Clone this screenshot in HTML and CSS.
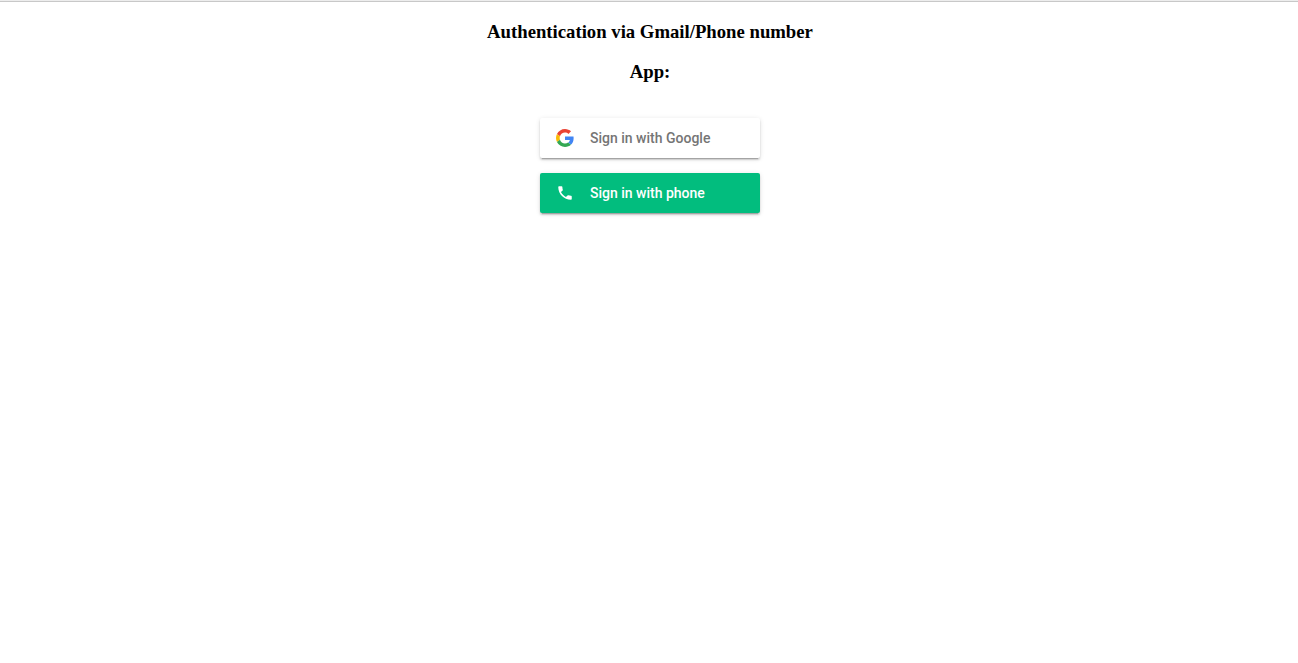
FILE: index.html
```html
<!DOCTYPE html>
<html lang="en">
<head>
<meta charset="utf-8">
<meta name="viewport" content="width=device-width, initial-scale=1">
<title>Authentication</title>
<link rel="stylesheet" href="styles.css">
</head>
<body>
<main class="page">
  <h3 class="heading">Authentication via Gmail/Phone number</h3>
  <h3 class="heading">App:</h3>
  <ul class="providers">
    <li>
      <button class="provider provider-google" type="button">
        <svg class="icon" viewBox="0 0 48 48" aria-hidden="true">
          <path fill="#EA4335" d="M24 9.5c3.54 0 6.71 1.22 9.21 3.6l6.85-6.85C35.9 2.38 30.47 0 24 0 14.62 0 6.51 5.38 2.56 13.22l7.98 6.19C12.43 13.72 17.74 9.5 24 9.5z"/>
          <path fill="#4285F4" d="M46.98 24.55c0-1.57-.15-3.09-.38-4.55H24v9.02h12.94c-.58 2.96-2.26 5.48-4.78 7.18l7.73 6c4.51-4.18 7.09-10.36 7.09-17.65z"/>
          <path fill="#FBBC05" d="M10.53 28.59c-.48-1.45-.76-2.99-.76-4.59s.27-3.14.76-4.59l-7.98-6.19C.92 16.46 0 20.12 0 24c0 3.88.92 7.54 2.56 10.78l7.97-6.19z"/>
          <path fill="#34A853" d="M24 48c6.48 0 11.93-2.13 15.89-5.81l-7.73-6c-2.15 1.45-4.92 2.3-8.16 2.3-6.26 0-11.57-4.22-13.47-9.91l-7.98 6.19C6.51 42.62 14.62 48 24 48z"/>
        </svg>
        <span class="label">Sign in with Google</span>
      </button>
    </li>
    <li>
      <button class="provider provider-phone" type="button">
        <svg class="icon" viewBox="0 0 24 24" aria-hidden="true">
          <path fill="#fff" d="M6.62 10.79c1.44 2.83 3.76 5.14 6.59 6.59l2.2-2.2c.27-.27.67-.36 1.02-.24 1.12.37 2.33.57 3.57.57.55 0 1 .45 1 1V20c0 .55-.45 1-1 1-9.39 0-17-7.61-17-17 0-.55.45-1 1-1h3.5c.55 0 1 .45 1 1 0 1.25.2 2.45.57 3.57.11.35.03.74-.25 1.02l-2.2 2.2z"/>
        </svg>
        <span class="label">Sign in with phone</span>
      </button>
    </li>
  </ul>
</main>
</body>
</html>
```
FILE: styles.css
```css
body {
  margin: 0;
  border-top: 1px solid #ededed;
  background: #fff;
  color: #000;
  font-family: "Liberation Serif", "Times New Roman", serif;
}

.page {
  border-top: 1px solid #c8c8c8;
  padding: 19px 8px 8px 10px;
  text-align: center;
}

.heading {
  margin: 0 0 18px;
  line-height: 22px;
}

.providers {
  display: flex;
  flex-direction: column;
  align-items: center;
  gap: 15px;
  margin: 35px 0 0;
  padding: 0;
  list-style: none;
}

.provider {
  display: flex;
  align-items: center;
  box-sizing: border-box;
  width: 220px;
  min-height: 40px;
  padding: 8px 16px;
  border: 0;
  border-radius: 2px;
  box-shadow: 0 2px 2px 0 rgba(0, 0, 0, .14), 0 3px 1px -2px rgba(0, 0, 0, .2), 0 1px 5px 0 rgba(0, 0, 0, .12);
  font-family: Roboto, sans-serif;
  font-size: 14px;
  font-weight: 500;
  line-height: 16px;
  text-align: left;
  cursor: pointer;
}

.provider-google {
  background: #fff;
  color: #757575;
}

.provider-phone {
  background: #02bd7e;
  color: #fff;
}

.icon {
  flex: none;
  width: 18px;
  height: 18px;
}

.label {
  padding-left: 16px;
}
```
